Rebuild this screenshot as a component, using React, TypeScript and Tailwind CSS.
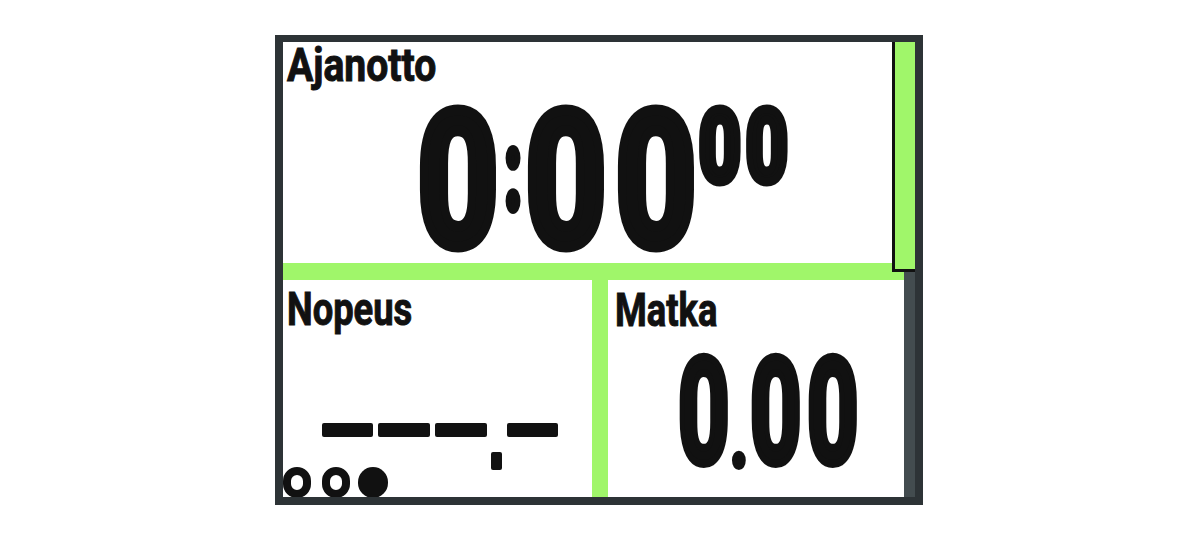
import React from "react";

// Garmin-style data screen: timer on top, speed + distance below

type GlyphProps = {
  box: string;
  text: string;
  children: React.ReactNode;
};

// one character, squeezed to the narrow display font and centred in its own box
const Glyph = ({ box, text, children }: GlyphProps) => {
  return (
    <span className={`flex shrink-0 items-center justify-center ${box}`}>
      <span className={`inline-block whitespace-nowrap ${text}`}>{children}</span>
    </span>
  );
};

const Label = ({ text, className }: { text: string; className: string }) => {
  return (
    <div className="h-[46px]">
      <span
        className={`inline-block origin-left whitespace-nowrap text-[46px] font-bold leading-none text-[#111] [-webkit-text-stroke:1px_#111] ${className}`}
      >
        {text}
      </span>
    </div>
  );
};

const BIG = "text-[188px] leading-[0.78] font-bold scale-x-[0.75] [-webkit-text-stroke:11px_#111]";
const SUP = "text-[101px] leading-[0.78] font-bold scale-x-[0.72] [-webkit-text-stroke:9px_#111]";
const MID = "text-[146px] leading-[0.78] font-bold scale-x-[0.615] translate-y-[3px] [-webkit-text-stroke:8px_#111]";

const App = () => {
  return (
    <div className="h-[538px] w-[1200px] bg-white pl-[275px] pt-[35px] font-['Roboto','Liberation_Sans',sans-serif] text-[#111]">
      <div className="h-[470px] w-[648px] bg-[#2d3336] pb-[8px] pl-[8px] pr-[8px] pt-[7px]">
        <div className="relative flex h-full">
          <div className="flex w-[621px] flex-col bg-white">
            {/* timer */}
            <div className="flex h-[221px] flex-col pl-[4px]">
              <Label text="Ajanotto" className="scale-x-[0.85]" />
              <div className="ml-[131px] mt-[17px] flex items-start">
                <Glyph box="w-[80px] h-[152px]" text={BIG}>
                  0
                </Glyph>
                <Glyph
                  box="ml-[8px] w-[15px] h-[152px]"
                  text="text-[108px] leading-[0.7] font-bold scale-x-[0.55] -translate-y-[9px] [-webkit-text-stroke:10px_#111]"
                >
                  :
                </Glyph>
                <Glyph box="ml-[5px] w-[80px] h-[152px]" text={BIG}>
                  0
                </Glyph>
                <Glyph box="ml-[10px] w-[80px] h-[152px]" text={BIG}>
                  0
                </Glyph>
                <Glyph box="ml-[2px] w-[43px] h-[84px]" text={SUP}>
                  0
                </Glyph>
                <Glyph box="ml-[4px] w-[43px] h-[84px]" text={SUP}>
                  0
                </Glyph>
              </div>
            </div>

            <div className="h-[17px] bg-[#a0f66a]" />

            <div className="flex flex-1">
              {/* speed */}
              <div className="flex w-[309px] flex-col overflow-hidden pl-[4px] pt-[6px]">
                <Label text="Nopeus" className="scale-x-[0.79]" />
                <div className="ml-[35px] mt-[91px] flex items-start" aria-label="---.-">
                  <div className="h-[14px] w-[51px] rounded-[2px] bg-[#111]" />
                  <div className="ml-[5px] h-[14px] w-[52px] rounded-[2px] bg-[#111]" />
                  <div className="ml-[5px] h-[14px] w-[52px] rounded-[2px] bg-[#111]" />
                  <div className="ml-[4px] h-[18px] w-[11px] translate-y-[29px] rounded-[2px] bg-[#111]" />
                  <div className="ml-[5px] h-[14px] w-[51px] rounded-[2px] bg-[#111]" />
                </div>
                <div className="-ml-[4px] mt-auto flex h-[30px] items-start">
                  <div className="h-[31px] w-[28px] shrink-0 rounded-full border-[8px] border-[#111]" />
                  <div className="ml-[11px] h-[31px] w-[28px] shrink-0 rounded-full border-[8px] border-[#111]" />
                  <div className="ml-[8px] h-[31px] w-[30px] shrink-0 rounded-full bg-[#111]" />
                </div>
              </div>

              <div className="w-[16px] bg-[#a0f66a]" />

              {/* distance */}
              <div className="flex flex-1 flex-col pl-[7px] pt-[7px]">
                <Label text="Matka" className="scale-x-[0.79]" />
                <div className="ml-[63px] mt-[19px] flex items-start">
                  <Glyph box="w-[51px] h-[118px]" text={MID}>
                    0
                  </Glyph>
                  <Glyph
                    box="ml-[2px] w-[16px] h-[118px]"
                    text="text-[90px] leading-[0.3] font-bold scale-x-[0.68] translate-y-[25px] [-webkit-text-stroke:6px_#111]"
                  >
                    .
                  </Glyph>
                  <Glyph box="ml-[3px] w-[51px] h-[118px]" text={MID}>
                    0
                  </Glyph>
                  <Glyph box="ml-[6px] w-[51px] h-[118px]" text={MID}>
                    0
                  </Glyph>
                </div>
              </div>
            </div>
          </div>

          {/* scroll track + thumb */}
          <div className="flex-1 bg-[#434c4f]" />
          <div className="absolute right-0 top-0 h-[230px] w-[23px] border-b-[3px] border-l-[3px] border-[#111] bg-[#a0f66a]" />
        </div>
      </div>
    </div>
  );
};

export default App;
